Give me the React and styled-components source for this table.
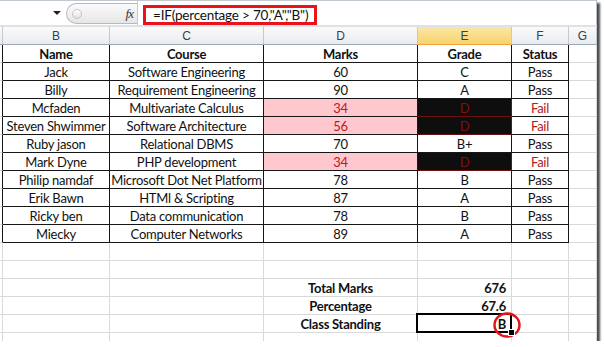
import React from 'react';
import styled, { createGlobalStyle, css } from 'styled-components';

const Global = createGlobalStyle`
  body {
    margin: 0;
    background: #fff;
    font-family: Lato, 'Liberation Sans', sans-serif;
  }
`;

const Shot = styled.div`
  width: 597px;
  height: 341px;
  overflow: hidden;
  background: #fff;
  box-shadow: 3px 3px 2px rgba(0, 0, 0, 0.7);
`;

const FormulaBar = styled.div`
  display: flex;
  height: 25px;
  box-sizing: border-box;
  border-top: 1px solid #c3c9d1;
  border-right: 1px solid #b8bec6;
  background: #fff;
`;

const NameBox = styled.div`
  width: 66px;
  display: flex;
  align-items: center;
  justify-content: flex-end;
  padding-right: 5px;
  box-sizing: border-box;
  &:after {
    content: '';
    border-left: 4px solid transparent;
    border-right: 4px solid transparent;
    border-top: 4px solid #222;
  }
`;

const Splitter = styled.div`
  width: 71px;
  margin: 2px 0 1px;
  display: flex;
  align-items: center;
  justify-content: space-between;
  padding: 0 4px 0 5px;
  box-sizing: border-box;
  border: 1px solid #b9b9b9;
  border-right: none;
  border-radius: 11px 0 0 11px;
  background: linear-gradient(#fbfbfb, #e6e6e6);
`;

const Knob = styled.span`
  width: 8px;
  height: 8px;
  border-radius: 50%;
  border: 1px solid #c4c4c4;
  background: linear-gradient(#fff, #e2e2e2);
`;

const Fx = styled.span`
  font-family: 'Liberation Serif', serif;
  font-style: italic;
  font-size: 13px;
  color: #333;
  letter-spacing: -1px;
`;

const FormulaInput = styled.div`
  flex: 1;
  display: flex;
  align-items: flex-end;
  padding-left: 5px;
  border-left: 1px solid #c9c9c9;
`;

const FormulaText = styled.span`
  height: 20px;
  box-sizing: border-box;
  display: flex;
  align-items: center;
  padding: 0 6px 0 7px;
  border: 3px solid #e8141b;
  font-size: 13.5px;
  letter-spacing: -0.2px;
  color: #111;
`;

const Gap = styled.div`
  height: 2px;
  background: #dde2e8;
`;

const Sheet = styled.div`
  position: relative;
  display: grid;
  grid-template-columns: 3px 107px 154px 154px 94px 57px 28px;
  grid-auto-rows: 18px;
`;

const dark = '#161616';

const Cell = styled.div`
  position: relative;
  box-sizing: border-box;
  border-right: 1px solid ${p => (p.$edge ? dark : '#d9d9d9')};
  border-bottom: 1px solid ${p => (p.$boxed ? dark : '#d9d9d9')};
  display: flex;
  align-items: center;
  justify-content: ${p => (p.$right ? 'flex-end' : 'center')};
  padding: ${p => (p.$right ? '0 5px 0 0' : '0')};
  font-size: 13px;
  letter-spacing: -0.25px;
  font-weight: ${p => (p.$bold ? 700 : 400)};
  color: #111;
  white-space: nowrap;
  overflow: hidden;
  ${p => p.$boxed && css`border-right-color: ${dark};`}
  ${p =>
    p.$tone === 'pink' &&
    css`
      background: #ffc7ce;
      color: #c0161c;
    `}
  ${p =>
    p.$tone === 'black' &&
    css`
      background: #0e0e0e;
      color: #8c0a0a;
      border-color: #6d1010;
    `}
  ${p => p.$tone === 'fail' && css`color: #b0201c;`}
  ${p =>
    p.$selected &&
    css`
      overflow: visible;
      &:after {
        content: '';
        position: absolute;
        inset: -2px -1px -1px -2px;
        border: 2px solid #000;
        pointer-events: none;
      }
      &:before {
        content: '';
        position: absolute;
        right: -4px;
        bottom: -4px;
        width: 5px;
        height: 5px;
        background: #000;
        border: 1px solid #fff;
        z-index: 2;
      }
    `}
`;

const Head = styled.div`
  box-sizing: border-box;
  border-right: 1px solid #c5c9cf;
  border-bottom: 1px solid #9ea8b4;
  display: flex;
  align-items: center;
  justify-content: center;
  font-family: 'Liberation Sans', sans-serif;
  font-size: 12px;
  color: #33404e;
  background: ${p =>
    p.$active
      ? 'linear-gradient(#fbe6a6, #f6d46c)'
      : 'linear-gradient(#fafafa, #e9ecef)'};
  ${p => p.$active && css`border-bottom-color: #f2a33b;`}
`;

const Circle = styled.svg`
  position: absolute;
  left: 492px;
  top: 283px;
  overflow: visible;
`;

const rows = [
  ['Jack', 'Software Engineering', '60', 'C', 'Pass'],
  ['Billy', 'Requirement Engineering', '90', 'A', 'Pass'],
  ['Mcfaden', 'Multivariate Calculus', '34', 'D', 'Fail'],
  ['Steven Shwimmer', 'Software Architecture', '56', 'D', 'Fail'],
  ['Ruby jason', 'Relational DBMS', '70', 'B+', 'Pass'],
  ['Mark Dyne', 'PHP development', '34', 'D', 'Fail'],
  ['Philip namdaf', 'Microsoft Dot Net Platform', '78', 'B', 'Pass'],
  ['Erik Bawn', 'HTMl & Scripting', '87', 'A', 'Pass'],
  ['Ricky ben', 'Data communication', '78', 'B', 'Pass'],
  ['Miecky', 'Computer Networks', '89', 'A', 'Pass'],
];

const summary = [
  ['Total Marks', '676'],
  ['Percentage', '67.6'],
  ['Class Standing', 'B', true],
];

const EmptyRow = () => (
  <>
    {Array.from({ length: 7 }).map((_, i) => (
      <Cell key={i} />
    ))}
  </>
);

const TableRow = ({ cells, bold }) => {
  const fail = cells[4] === 'Fail';
  return (
    <>
      <Cell $edge />
      <Cell $boxed $bold={bold}>{cells[0]}</Cell>
      <Cell $boxed $bold={bold}>{cells[1]}</Cell>
      <Cell $boxed $bold={bold} $tone={fail ? 'pink' : undefined}>{cells[2]}</Cell>
      <Cell $boxed $bold={bold} $tone={fail ? 'black' : undefined}>{cells[3]}</Cell>
      <Cell $boxed $bold={bold} $tone={fail ? 'fail' : undefined}>{cells[4]}</Cell>
      <Cell />
    </>
  );
};

export default function App() {
  return (
    <Shot>
      <Global />
      <FormulaBar>
        <NameBox />
        <Splitter>
          <Knob />
          <Fx>fx</Fx>
        </Splitter>
        <FormulaInput>
          <FormulaText>=IF(percentage &gt; 70,"A","B")</FormulaText>
        </FormulaInput>
      </FormulaBar>
      <Gap />
      <Sheet>
        <Head />
        <Head>B</Head>
        <Head>C</Head>
        <Head>D</Head>
        <Head $active>E</Head>
        <Head>F</Head>
        <Head>G</Head>

        <TableRow cells={['Name', 'Course', 'Marks', 'Grade', 'Status']} bold />
        {rows.map(r => (
          <TableRow key={r[0]} cells={r} />
        ))}

        <EmptyRow />
        <EmptyRow />

        {summary.map(([label, value, selected]) => (
          <React.Fragment key={label}>
            <Cell />
            <Cell />
            <Cell />
            <Cell $bold>{label}</Cell>
            <Cell $bold $right $selected={selected}>{value}</Cell>
            <Cell />
            <Cell />
          </React.Fragment>
        ))}

        <EmptyRow />

        <Circle width="30" height="30" viewBox="0 0 30 30">
          <ellipse cx="15" cy="15" rx="12.5" ry="11.5" fill="none" stroke="#e3141b" strokeWidth="2.5" />
        </Circle>
      </Sheet>
    </Shot>
  );
}
